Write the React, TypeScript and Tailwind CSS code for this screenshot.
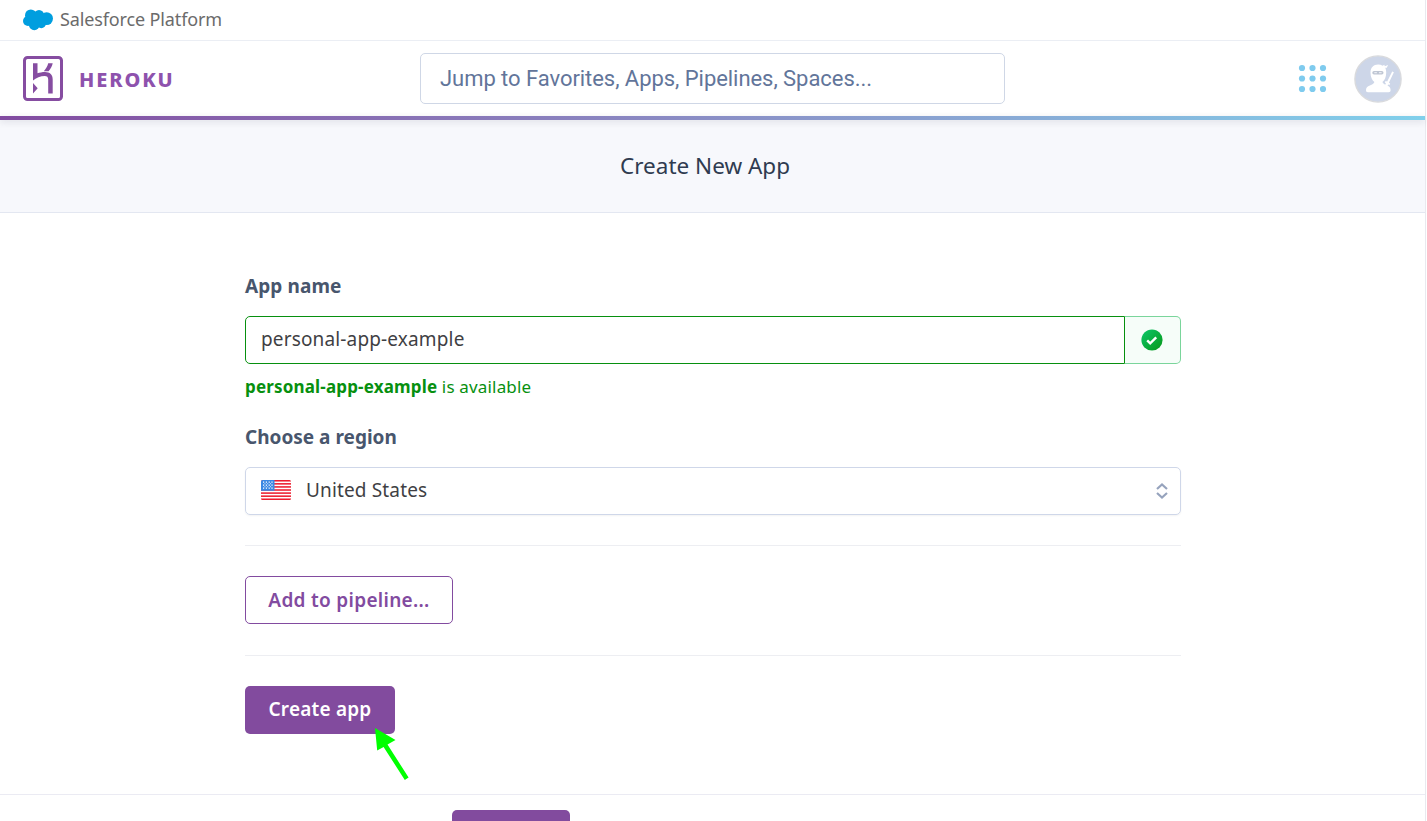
const DOTS = [4, 14.5, 25];
const STRIPES = [0, 1, 2, 3, 4, 5, 6];

function Cloud() {
  return (
    <svg width="30" height="22" viewBox="0 0 30 22" fill="#009edf">
      <circle cx="7.8" cy="6.2" r="5.8" />
      <circle cx="16" cy="6.2" r="5.2" />
      <circle cx="23.6" cy="9.6" r="6.4" />
      <circle cx="5" cy="12" r="5" />
      <circle cx="11.3" cy="15.8" r="5.4" />
      <circle cx="18.3" cy="14.5" r="4.7" />
      <rect x="6" y="6" width="16" height="9" />
    </svg>
  );
}

function HerokuMark() {
  return (
    <svg width="40" height="45" viewBox="0 0 40 45" fill="#864da1">
      <rect x="1.5" y="1.5" width="37" height="42" rx="3" fill="none" stroke="#864da1" strokeWidth="3" />
      <path d="M10 7.300h4.500v9.900c2-.7 4.800-1.300 7.500-1.300c4.900 0 7.700 2.700 7.700 7.500V37.500h-4.500V23.700c0-2.500-1.200-3.600-3.500-3.600c-4.100 0-8.700 2-11.700 4.500zM10 27l4.700 5.300L10 37.600zM25.200 7.300h4.500c-.5 2.900-1.900 5.400-4.100 7.900h-4.800c2.200-2.500 3.900-5 4.400-7.900z" />
    </svg>
  );
}

function Avatar() {
  return (
    <svg width="48" height="48" viewBox="0 0 48 48">
      <circle cx="24" cy="24" r="23.100" fill="#cdd6e8" stroke="#d9dadd" strokeWidth="1.400" />
      <g fill="#fff">
        <path d="M16.500 17.500c0-5 3-8 7.600-8c1.700 0 3.200.4 4.500 1.200l1.700-1l.5 1.500l3.300-1.200l-1.300 2.700h-1.500c.6 1.400.9 3 .9 4.700c0 4.500-1.600 8-3.800 9.700c.5 1.600 2.300 2.500 4.700 3.400c2.400.9 3.500 2.100 3.500 4.500c0 1.800-.7 2.200-2 2.200H14c-1.500 0-2-.5-2-2.200c0-2.400 1.300-3.700 3.900-4.600c2.400-.8 4.100-1.700 4.500-3.300c-2.300-1.700-3.900-5.100-3.900-9.600z" />
        <path d="m38.200 16.500l1.700.8l-5 10.500l1.300.8l-.7 1.300l-1.200-.4l-2 3.200l-2-.9l1.600-3.600l-1.100-.8l.8-1.500l1.600.7z" />
      </g>
      <rect x="18.300" y="16" width="11.200" height="3.400" rx="1.700" fill="#bfc6d3" />
      <path d="M20.300 17.700h2.600M25 17.700h2.600" stroke="#e8ebf2" strokeWidth="1.200" />
    </svg>
  );
}

function Flag() {
  return (
    <svg className="-mt-0.5" width="30" height="20" viewBox="0 0 30 20">
      <clipPath id="flag"><rect width="30" height="20" rx="1.500" /></clipPath>
      <g clipPath="url(#flag)">
        <rect width="30" height="20" fill="#fff" />
        {STRIPES.map((i) => (
          <rect key={i} y={i * 3.08} width="30" height="1.540" fill="#ed1c2e" />
        ))}
        <rect width="13.500" height="10.800" fill="#3b88e3" />
        <path d="M2 2.200h10M2 5.200h10M2 8.200h10" stroke="#fff" strokeWidth="1.200" strokeDasharray="1.200 1.600" />
        <path d="M3.400 3.700h8M3.400 6.700h8" stroke="#cfe2fa" strokeWidth="1" strokeDasharray="1 1.800" />
      </g>
    </svg>
  );
}

export default function App() {
  return (
    <div className="relative flex h-[821px] w-[1427px] flex-col overflow-hidden bg-white font-['Noto_Sans',sans-serif]">
      <div className="flex h-full w-[1426px] flex-col border-r border-[#e9e9ef]">
        <div className="flex h-[41px] shrink-0 items-center gap-[7px] border-b border-[#ebeef4] pb-px pl-[23px]">
          <Cloud />
          <span className="pb-0.5 text-[18px] leading-5 tracking-[-0.130px] text-[#6b6b6b]">Salesforce Platform</span>
        </div>
        <header className="flex h-[75px] shrink-0 items-center pl-[23px] pr-[23.5px]">
          <div className="flex w-[397px] items-center gap-4">
            <HerokuMark />
            <span className="pt-0.5 text-[20px] font-extrabold leading-6 tracking-[1.900px] text-[#8e52ad]">HEROKU</span>
          </div>
          <div className="flex h-[51px] w-[585px] items-center rounded-[5px] border border-[#cfd7e6] pl-[19px] font-[Roboto,sans-serif] text-[22px] tracking-[-0.050px] text-[#62759a]">
            Jump to Favorites, Apps, Pipelines, Spaces...
          </div>
          <div className="ml-auto flex items-center gap-[26.5px]">
            <svg width="29" height="29" viewBox="0 0 29 29" fill="#7fcbee">
              {DOTS.map((y) => DOTS.map((x) => <circle key={`${x}-${y}`} cx={x} cy={y} r="3.100" />))}
            </svg>
            <Avatar />
          </div>
        </header>
        <div className="z-10 h-1 shrink-0 bg-linear-to-r from-[#824ba0] to-[#80d0eb] shadow-[0_2px_6px_rgba(60,60,80,0.150)]" />
        <div className="flex h-[93px] shrink-0 items-center justify-center border-b border-[#e3e7f1] bg-[#f7f8fc] pr-[15px] text-[22.500px] text-[#2f3b50]">
          <h1>Create New App</h1>
        </div>
        <main className="flex h-[581px] shrink-0 flex-col items-start pl-[245px] pr-[244px] pt-[60px]">
          <label className="h-[43px] text-[19px] font-bold leading-[27px] tracking-[0.100px] text-[#48566d]">App name</label>
          <div className="flex h-12 w-[936px] shrink-0">
            <div className="flex w-[880px] items-center rounded-l-[5px] border border-[#07900f] pb-0.5 pl-[15px] text-[19px] tracking-[0.150px] text-[#3f3f44]">
              personal-app-example
            </div>
            <div className="flex w-14 items-center justify-center rounded-r-[5px] border border-l-0 border-[#7ad59b] bg-[#f6fdf9] pr-0.5">
              <svg width="22" height="22" viewBox="0 0 22 22">
                <defs>
                  <linearGradient id="ok" x1="0" y1="0" x2="1" y2="1">
                    <stop stopColor="#0cc76a" />
                    <stop offset="1" stopColor="#079718" />
                  </linearGradient>
                </defs>
                <circle cx="11" cy="11" r="10.600" fill="url(#ok)" />
                <path d="m6.200 11.300l3 3l6-6" fill="none" stroke="#fff" strokeWidth="2.400" />
              </svg>
            </div>
          </div>
          <p className="mt-[11px] h-[49px] text-[17px] leading-6 tracking-[0.170px] text-[#07900f]">
            <b>personal-app-example</b> is available
          </p>
          <label className="h-[43px] text-[19px] font-bold leading-[27px] text-[#48566d]">Choose a region</label>
          <div className="flex h-12 w-[936px] shrink-0 items-center rounded-[5px] border border-[#cfd7e9] pl-[15px] pr-3 text-[19px] tracking-[0.150px] text-[#3f3f44] shadow-[0_1px_2px_rgba(0,0,0,0.050)]">
            <Flag />
            <span className="ml-[15px] pb-0.5">United States</span>
            <svg className="ml-auto" width="12" height="16" viewBox="0 0 12 16" fill="none" stroke="#96a3bd" strokeWidth="2.200">
              <path d="m1 6l5-4.500L11 6M1 10l5 4.500L11 10" />
            </svg>
          </div>
          <hr className="mt-[30px] w-full border-[#edeef2]" />
          <button className="mt-[30px] h-12 w-[208px] shrink-0 rounded-[5px] border border-[#824ba0] text-[19px] font-semibold tracking-[0.300px] text-[#824ba0]">
            Add to pipeline...
          </button>
          <hr className="mt-[31px] w-full border-[#edeef2]" />
          <button className="mt-[30px] h-12 w-[150px] shrink-0 rounded-[5px] bg-[#824b9e] pb-0.5 text-[19px] font-semibold tracking-[0.200px] text-white">
            Create app
          </button>
        </main>
        <footer className="h-[27px] shrink-0 border-t border-[#ebebf3] pl-[452px] pt-[15px]">
          <div className="h-12 w-[118px] rounded-[5px] bg-[#824b9e]" />
        </footer>
      </div>
      <svg className="absolute left-[374px] top-[727px]" width="36" height="54" viewBox="0 0 36 54" fill="#00ff00">
        <path d="M1 1l20.500 12l-8 4.600L34.600 50.500l-3.800 2.400L9.600 20L3.200 23.500z" />
      </svg>
    </div>
  );
}
